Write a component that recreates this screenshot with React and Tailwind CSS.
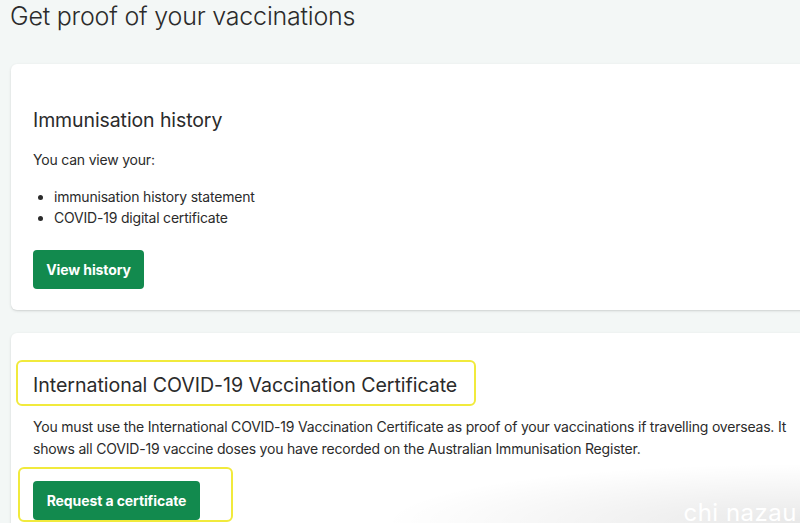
import React from 'react';

const Card = ({ children, className = '' }) => (
  <div className={`relative bg-white rounded-md shadow-[0_1px_3px_rgba(0,0,0,0.12),0_1px_1px_rgba(0,0,0,0.04)] w-[820px] pl-[22px] ${className}`}>
    {children}
  </div>
);

const GreenButton = ({ children, className = '' }) => (
  <button className={`bg-[#128a4e] text-white font-bold text-[14px] tracking-[-0.1px] rounded-[4px] h-[39px] ${className}`}>
    {children}
  </button>
);

export default function App() {
  return (
    <div
      className="relative w-[800px] h-[523px] overflow-hidden bg-[#f3f7f6] text-[#2b2b2b] pl-[11px]"
      style={{ fontFamily: 'Inter, "Liberation Sans", sans-serif' }}
    >
      {/* Page title */}
      <h1 className="text-[25px] font-light leading-[30px] -ml-[1px] pt-[1px] h-[64px] tracking-[-0.2px]">
        Get proof of your vaccinations
      </h1>

      {/* Immunisation history */}
      <Card className="pt-[42px] pb-[21px] h-[246px]">
        <h2 className="text-[19.5px] leading-[28px] font-normal tracking-[-0.1px]">Immunisation history</h2>
        <p className="text-[14px] leading-[20px] mt-[16px] tracking-[-0.2px]">You can view your:</p>
        <ul className="mt-[16px] text-[14px] leading-[21px] list-disc pl-[21px] tracking-[-0.2px]">
          <li>immunisation history statement</li>
          <li>COVID-19 digital certificate</li>
        </ul>
        <GreenButton className="mt-[22px] w-[111px]">View history</GreenButton>
      </Card>

      {/* International certificate */}
      <Card className="mt-[23px] pt-[38px] h-[220px]">
        <h2 className="text-[19.6px] leading-[28px] font-normal tracking-[-0.05px]">
          International COVID-19 Vaccination Certificate
        </h2>
        <p className="text-[14px] leading-[22px] mt-[17px] w-[770px] tracking-[-0.2px]">
          You must use the International COVID-19 Vaccination Certificate as proof of your vaccinations if travelling overseas. It shows all COVID-19 vaccine doses you have recorded on the Australian Immunisation Register.
        </p>
        <GreenButton className="mt-[21px] w-[167px]">Request a certificate</GreenButton>

        {/* highlight annotations */}
        <div className="absolute left-[5px] top-[27px] w-[460px] h-[46px] border-[2.5px] border-[#f1ea3c] rounded-[6px]" />
        <div className="absolute left-[7px] top-[134px] w-[215px] h-[55px] border-[2.5px] border-[#f1ea3c] rounded-[6px]" />
      </Card>

      {/* watermark */}
      <div className="absolute right-0 bottom-0 w-[420px] h-[60px] bg-[radial-gradient(ellipse_at_bottom_right,rgba(0,0,0,0.09),transparent_70%)]" />
      <div className="absolute right-[3px] bottom-[-5px] text-white text-[24px] leading-[30px] tracking-[0.5px]">
        chi nazau
      </div>
    </div>
  );
}
